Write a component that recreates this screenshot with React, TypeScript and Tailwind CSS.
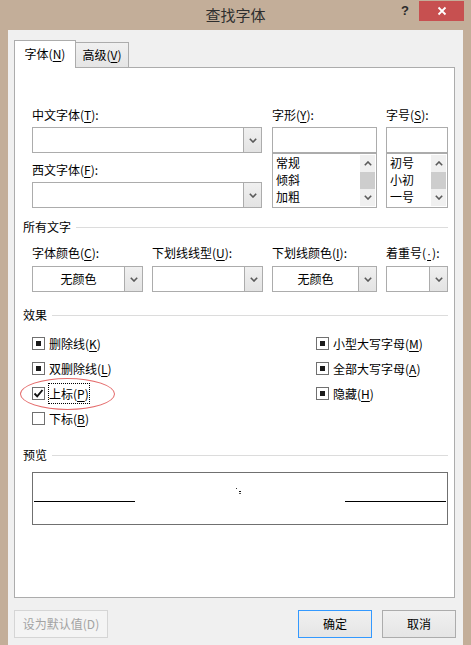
import React from "react";

const Chevron = ({ up = false }: { up?: boolean }) => (
  <svg width="8" height="5" viewBox="0 0 8 5" className="block">
    <path
      d={up ? "M0.8 4.2 L4 1 L7.2 4.2" : "M0.8 0.8 L4 4 L7.2 0.8"}
      fill="none"
      stroke="#5a5a5a"
      strokeWidth="1.6"
    />
  </svg>
);

const U = ({ c }: { c: string }) => <span className="underline underline-offset-[2px]">{c}</span>;

function Label({ t, k, tail = "):" }: { t: string; k: React.ReactNode; tail?: string }) {
  return (
    <div className="h-[16px] leading-[16px] text-[12px] text-black whitespace-nowrap">
      {t}(<span className="underline underline-offset-[2px]">{k}</span>
      {tail}
    </div>
  );
}

function DropBtn() {
  return (
    <div className="w-[18px] h-full border-l border-[#acacac] bg-gradient-to-b from-[#f0f0f0] to-[#e3e3e3] flex items-center justify-center">
      <Chevron />
    </div>
  );
}

function Combo({ className, text }: { className: string; text?: string }) {
  return (
    <div className={"h-[26px] border border-[#acacac] bg-white flex " + className}>
      <div className="flex-1 flex items-center justify-center text-[12px] leading-[16px] text-black">{text}</div>
      <DropBtn />
    </div>
  );
}

function ListBox({ items }: { items: string[] }) {
  return (
    <div className="h-[55px] border border-[#acacac] bg-white flex">
      <div className="flex-1 pl-[3px] pt-[0px] flex flex-col">
        {items.map((it) => (
          <div key={it} className="h-[17px] leading-[17px] text-[12px] text-black">
            {it}
          </div>
        ))}
      </div>
      <div className="w-[15px] mr-[1px] flex flex-col bg-[#f0f0f0] my-[1px]">
        <div className="h-[17px] flex items-center justify-center">
          <Chevron up />
        </div>
        <div className="flex-1 bg-[#cdcdcd]" />
        <div className="h-[17px] flex items-center justify-center">
          <Chevron />
        </div>
      </div>
    </div>
  );
}

function Heading({ t }: { t: string }) {
  return (
    <div className="h-[16px] flex items-center gap-[5px]">
      <span className="text-[12px] leading-[16px] text-black whitespace-nowrap">{t}</span>
      <div className="flex-1 h-px bg-[#dcdcdc]" />
    </div>
  );
}

function Check({
  t,
  k,
  state,
  focus = false,
}: {
  t: string;
  k: string;
  state: "ind" | "on" | "off";
  focus?: boolean;
}) {
  return (
    <div className="h-[25px] flex items-center">
      <div className="w-[13px] h-[13px] border border-[#707070] bg-white flex items-center justify-center">
        {state === "ind" && <div className="w-[5px] h-[5px] bg-[#1a1a1a]" />}
        {state === "on" && (
          <svg width="11" height="11" viewBox="0 0 11 11" className="block">
            <path d="M1.5 5.5 L4.2 8.3 L9.5 2" fill="none" stroke="#111" strokeWidth="1.9" />
          </svg>
        )}
      </div>
      <span
        className={
          "ml-[3px] px-[0px] h-[21px] leading-[19px] text-[12px] text-black whitespace-nowrap border " +
          (focus ? "border-dotted border-black" : "border-transparent")
        }
      >
        {t}(<U c={k} />)
      </span>
    </div>
  );
}

export default function App() {
  return (
    <div className="w-[471px] h-[645px] bg-[#c3ae99] flex flex-col font-['Noto_Sans_CJK_SC','Noto_Sans',sans-serif] overflow-hidden">
      {/* title bar */}
      <div className="h-[30px] grid grid-cols-[1fr_auto_1fr]">
        <div />
        <div className="text-[15px] leading-[30px] text-[#2e2e2e]">查找字体</div>
        <div className="flex justify-end items-start pr-[7px] pt-[1px]">
          <div className="w-[26px] h-[20px] flex items-center justify-center text-[13px] font-bold text-[#2b2b2b] font-['Liberation_Sans',sans-serif]">
            ?
          </div>
          <div className="ml-[1px] w-[45px] h-[20px] bg-[#c75050] flex items-center justify-center">
            <svg width="10" height="10" viewBox="0 0 10 10" className="block">
              <path d="M1.5 1.5 L8.5 8.5 M8.5 1.5 L1.5 8.5" stroke="#fff" strokeWidth="1.8" />
            </svg>
          </div>
        </div>
      </div>

      {/* client */}
      <div className="mx-[8px] flex-1 bg-[#f0f0f0] pl-[6px] pr-[8px] pt-[10px] flex flex-col">
        {/* tabs */}
        <div className="flex items-end h-[27px]">
          <div className="relative z-10 w-[62px] h-[28px] -mb-px bg-white border border-b-0 border-[#acacac] flex items-center justify-center text-[12px] leading-[16px] text-black pb-[1px]">
            <span>
              字体(<U c="N" />)
            </span>
          </div>
          <div className="-ml-px w-[54px] h-[25px] bg-gradient-to-b from-[#f0f0f0] to-[#e5e5e5] border border-b-0 border-[#acacac] flex items-center justify-center text-[12px] leading-[16px] text-black">
            <span>
              高级(<U c="V" />)
            </span>
          </div>
        </div>

        {/* panel */}
        <div className="h-[531px] border border-[#acacac] bg-white pl-[8px] pr-[6px] pt-[39px] flex flex-col">
          {/* font grid */}
          <div className="ml-[9px] grid grid-cols-[111px_111px_105px_62px] gap-x-[9px]">
            <div className="col-span-2 flex flex-col">
              <Label t="中文字体" k="T" />
              <Combo className="mt-[4px] w-[230px]" />
              <div className="mt-[9px]">
                <Label t="西文字体" k="F" />
              </div>
              <Combo className="mt-[4px] w-[230px]" />
            </div>
            <div className="flex flex-col">
              <Label t="字形" k="Y" />
              <div className="mt-[4px] h-[26px] border border-[#acacac] bg-white" />
              <ListBox items={["常规", "倾斜", "加粗"]} />
            </div>
            <div className="flex flex-col">
              <Label t="字号" k="S" />
              <div className="mt-[4px] h-[26px] border border-[#acacac] bg-white" />
              <ListBox items={["初号", "小初", "一号"]} />
            </div>
          </div>

          {/* 所有文字 */}
          <div className="mt-[11px]">
            <Heading t="所有文字" />
          </div>
          <div className="mt-[10px] ml-[9px] grid grid-cols-[111px_111px_105px_62px] gap-x-[9px]">
            <Label t="字体颜色" k="C" />
            <Label t="下划线线型" k="U" />
            <Label t="下划线颜色" k="I" />
            <Label
              t="着重号"
              k={<span className="font-['Liberation_Sans',sans-serif] px-[1px]">·</span>}
            />
            <Combo className="mt-[5px]" text="无颜色" />
            <Combo className="mt-[5px]" />
            <Combo className="mt-[5px]" text="无颜色" />
            <Combo className="mt-[5px]" />
          </div>

          {/* 效果 */}
          <div className="mt-[15px]">
            <Heading t="效果" />
          </div>
          <div className="mt-[8px] ml-[9px] grid grid-cols-[284px_1fr]">
            <div className="flex flex-col">
              <Check t="删除线" k="K" state="ind" />
              <Check t="双删除线" k="L" state="ind" />
              <div className="relative">
                <Check t="上标" k="P" state="on" focus />
                <div className="absolute left-[-12px] top-[-3px] w-[95px] h-[32px] rounded-[50%] border border-[#e46a6a] pointer-events-none" />
              </div>
              <Check t="下标" k="B" state="off" />
            </div>
            <div className="flex flex-col">
              <Check t="小型大写字母" k="M" state="ind" />
              <Check t="全部大写字母" k="A" state="ind" />
              <Check t="隐藏" k="H" state="ind" />
            </div>
          </div>

          {/* 预览 */}
          <div className="mt-[16px]">
            <Heading t="预览" />
          </div>
          <div className="mt-[9px] ml-[9px] w-[416px] h-[53px] border border-[#707070] bg-white flex px-[1px]">
            <div className="w-[101px] h-px bg-black mt-[28px]" />
            <div className="flex-1">
              <svg width="6" height="6" viewBox="0 0 6 6" className="block ml-[101px] mt-[15px]">
                <rect x="0" y="0" width="1" height="1" fill="#333" />
                <rect x="3" y="3" width="2" height="1" fill="#111" />
                <rect x="3" y="5" width="2" height="1" fill="#555" />
              </svg>
            </div>
            <div className="w-[101px] h-px bg-black mt-[28px]" />
          </div>
        </div>

        {/* buttons */}
        <div className="mt-[12px] flex items-start">
          <div className="w-[94px] h-[28px] border border-[#d5d5d5] bg-[#f4f4f4] flex items-center justify-center text-[12px] text-[#a3a3a3]">
            设为默认值(D)
          </div>
          <div className="flex-1" />
          <div className="w-[74px] h-[28px] border border-[#3399ff] bg-gradient-to-b from-[#f0f0f0] to-[#e5e5e5] flex items-center justify-center text-[12px] text-black">
            确定
          </div>
          <div className="ml-[10px] -mr-[1px] w-[74px] h-[28px] border border-[#acacac] bg-gradient-to-b from-[#f0f0f0] to-[#e5e5e5] flex items-center justify-center text-[12px] text-black">
            取消
          </div>
        </div>
      </div>
    </div>
  );
}
